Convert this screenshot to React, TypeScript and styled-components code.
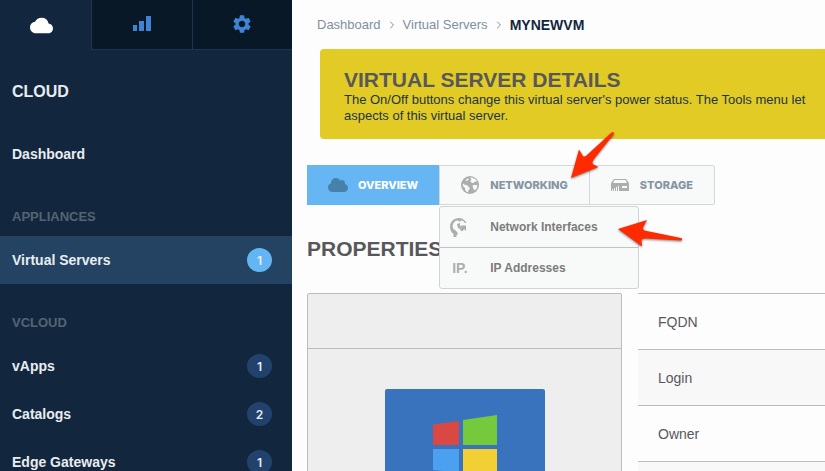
import React from "react";
import styled, { createGlobalStyle, css } from "styled-components";
import { MdCloud, MdSettings } from "react-icons/md";
import { FaCloud } from "react-icons/fa";
import { ChevronRight } from "lucide-react";

const GlobalStyle = createGlobalStyle`
  *, *::before, *::after { box-sizing: border-box; }
  body {
    margin: 0;
    background: #fdfdfd;
    color: #12273d;
    font-family: "Liberation Sans", Arial, sans-serif;
    font-size: 14px;
  }
  h1, h2, h3, p, ul, ol { margin: 0; padding: 0; }
  ul, ol { list-style: none; }
  a { color: inherit; text-decoration: none; }
  button { font: inherit; margin: 0; cursor: pointer; }
  svg { display: block; flex: none; }
`;

const Page = styled.div`
  position: relative;
  display: grid;
  grid-template-columns: 292px minmax(0, 1fr);
  height: 100vh;
  overflow: hidden;
`;

const Sidebar = styled.aside`
  background: #12273d;
  color: #e9edf1;
  font-weight: bold;
`;

const SectionTabs = styled.div`
  display: grid;
  grid-template-columns: 91px 1fr 1fr;
  height: 50px;
`;

const SectionTab = styled.button<{ $active?: boolean }>`
  display: flex;
  align-items: center;
  justify-content: center;
  padding: 0 8px 0 0;
  border: 0;
  background: #12273d;
  color: #ffffff;
  ${(p) =>
    !p.$active &&
    css`
      padding: 0 0 2px;
      border-left: 1px solid #1b3653;
      border-bottom: 1px solid #1b3653;
      background: #081826;
      color: #4082d4;
    `}
`;

const SidebarTitle = styled.h2`
  display: flex;
  align-items: center;
  height: 80px;
  padding: 4px 12px 0;
  font-size: 16px;
`;

const GroupTitle = styled.h3`
  display: flex;
  align-items: center;
  height: 58px;
  padding: 18px 12px 0;
  font-size: 13px;
  color: #526474;
`;

const NavLink = styled.a<{ $active?: boolean }>`
  display: flex;
  align-items: center;
  justify-content: space-between;
  height: 48px;
  padding: 0 20px 0 12px;
  background: ${(p) => (p.$active ? "#244362" : "transparent")};
`;

const Badge = styled.span<{ $active?: boolean }>`
  display: flex;
  align-items: center;
  justify-content: center;
  width: 25px;
  height: 24px;
  border-radius: 50%;
  background: ${(p) => (p.$active ? "#64b5f4" : "#20426d")};
  font-family: Inter, sans-serif;
  font-size: 12px;
  font-weight: 600;
`;

const Main = styled.main`
  min-width: 0;
  padding-left: 15px;
`;

const Breadcrumb = styled.ol`
  display: flex;
  align-items: center;
  height: 49px;
  padding-left: 10px;
  font-size: 13px;
  color: #7f909f;

  li {
    display: flex;
    align-items: center;
  }
  svg {
    margin: 0 5px;
  }
`;

const Current = styled.strong`
  font-size: 14px;
  color: #12273d;
`;

const Banner = styled.section`
  height: 90px;
  margin-left: 13px;
  padding: 19px 0 0 24px;
  border-radius: 4px 0 0 4px;
  background: #e1cb24;
  font-size: 13px;
  line-height: 16px;
  white-space: nowrap;
  color: #1f3444;
`;

const Heading = styled.h1`
  font-size: 21px;
  line-height: 24px;
  color: #58585b;
`;

const TabBar = styled.nav`
  display: flex;
  width: max-content;
  height: 40px;
  margin-top: 26px;
  border: 1px solid #d3d8dc;
  border-radius: 2px;
  background: #f8faf9;
`;

const TabSlot = styled.div`
  position: relative;
  display: flex;

  & + & {
    border-left: 1px solid #d3d8dc;
  }
`;

const Tab = styled.button<{ $active?: boolean }>`
  display: flex;
  align-items: center;
  gap: 11px;
  padding: 0 21px;
  border: 0;
  background: transparent;
  color: #8595a4;
  font-family: Inter, sans-serif;
  font-size: 11px;
  font-weight: 800;

  svg {
    color: #acaeae;
  }
  ${(p) =>
    p.$active &&
    css`
      gap: 10px;
      margin: -1px 0 -1px -1px;
      background: #66b6f3;
      color: #ffffff;
      svg {
        color: #4681ab;
      }
    `}
`;

const Menu = styled.ul`
  position: absolute;
  z-index: 2;
  top: 40px;
  left: -1px;
  width: 200px;
  border: 1px solid #d0d4d7;
  border-radius: 3px;
  background: #f8faf9;

  li + li {
    border-top: 1px solid #c0c2c3;
  }
`;

const MenuLink = styled.a`
  display: grid;
  grid-template-columns: 20px 1fr;
  gap: 20px;
  align-items: center;
  height: 40px;
  padding-left: 10px;
  font-size: 12px;
  font-weight: bold;
  color: #7c7c7c;
`;

const IpMark = styled.span`
  padding-left: 2px;
  font-size: 14px;
  color: #adafaf;
`;

const Title = styled.h2`
  margin: 32px 0;
  font-size: 21px;
  line-height: 24px;
  color: #58585b;
`;

const Details = styled.div`
  display: grid;
  grid-template-columns: 315px minmax(0, 1fr);
  gap: 16px;
`;

const Card = styled.section`
  border: 1px solid #bbbcbc;
  border-radius: 2px;
  background: #eeeeee;
`;

const CardHeader = styled.header`
  height: 55px;
  border-bottom: 1px solid #bbbcbc;
`;

const CardBody = styled.div`
  display: flex;
  justify-content: center;
  padding: 40px 0;
`;

const OsTile = styled.div`
  display: flex;
  justify-content: center;
  width: 160px;
  height: 160px;
  padding-top: 26px;
  border-radius: 2px;
  background: #3a73bd;
`;

const Properties = styled.table`
  width: 100%;
  align-self: start;
  border-collapse: collapse;

  tr {
    border-top: 1px solid #bbbcbc;
  }
  tr:nth-child(even) {
    background: #f8f8f8;
  }
  th {
    height: 56px;
    padding: 0 20px;
    font-weight: normal;
    text-align: left;
    color: #58585b;
  }
`;

const Pointer = styled.svg<{ $left: number; $top: number }>`
  position: absolute;
  z-index: 3;
  left: ${(p) => p.$left}px;
  top: ${(p) => p.$top}px;
  fill: #ff2a00;
  filter: drop-shadow(0 1px 1px rgba(0, 0, 0, 0.5));
  pointer-events: none;
`;

const BarsIcon = () => (
  <svg width="18" height="15" viewBox="0 0 18 15" fill="currentColor" aria-hidden="true">
    <path d="M0 9h4v6H0zM6 5h5v10H6zM13 0h5v15h-5z" />
  </svg>
);

const GlobeIcon = () => (
  <svg width="18" height="18" viewBox="0 0 18 18" aria-hidden="true">
    <circle cx="9" cy="9" r="9" fill="currentColor" />
    <path
      fill="#f8faf9"
      d="M9 1.500l2.500.2 3.200 1.800 1.300 2-2.500.3-1.200 1.500-1.800-.8L9.200 5 10.500 3.500zM1.700 7.500l2 1.300L5.500 9l2.500 2 .8 1.600-1.300 1.600-.5 2L4.500 15 4 12 2 10zM6 2.500 8 3 6.500 4.500 4.500 5.200zM11.500 9.500l2.300-.7 2.700.8-.8 2.900-1.900 2-1.500-1.800z"
    />
  </svg>
);

const InterfacesIcon = () => (
  <svg width="18" height="19" viewBox="0 0 18 19" fill="#acaeae" aria-hidden="true">
    <path
      fillRule="evenodd"
      d="M9 0C4 0 0 3.800 0 8.700c0 3.300 1.600 6 3.500 7.400V19h3v-2h1v-2.500l-1.800-2L3.500 11 2.500 8.500l.7-3L5.500 3 8 2.500l2 1.500 1-1.700 2.500 1L15 5h1.500C15 2 12.500 0 9 0z"
    />
    <path d="M7 6l3-1v3l2 1-2 2-2-1zM10.500 7.500H16V13l-1.800-1.700L12 13.500 9.800 11.500 12 9.300z" />
  </svg>
);

const DriveIcon = () => (
  <svg width="18" height="12" viewBox="0 0 18 12" fill="currentColor" aria-hidden="true">
    <path
      fillRule="evenodd"
      d="M3 0h12l3 4v8H8V7H7v5H6V8H5v4H4V9H3v3H2v-2H1v2H0V4zM3.500 1 2 4h14l-1.500-3zM11 7v2h5V7z"
    />
  </svg>
);

const WindowsIcon = () => (
  <svg width="64" height="73" viewBox="0 0 64 73" role="img" aria-label="Windows">
    <path fill="#da4844" d="M0 9.500 26 6v24H0z" />
    <path fill="#74ca3c" d="M30 5 64 0v30H30z" />
    <path fill="#4ba1f0" d="M0 34h26v23.500L0 55z" />
    <path fill="#f1cf35" d="M30 34h34v30l-34-5z" />
  </svg>
);

const groups = [
  { title: "APPLIANCES", items: [{ label: "Virtual Servers", count: 1, active: true }] },
  {
    title: "VCLOUD",
    items: [
      { label: "vApps", count: 1, active: false },
      { label: "Catalogs", count: 2, active: false },
      { label: "Edge Gateways", count: 1, active: false },
    ],
  },
];

const properties = ["FQDN", "Login", "Owner", ""];

export default function App() {
  return (
    <Page>
      <GlobalStyle />
      <Sidebar>
        <SectionTabs>
          <SectionTab $active aria-label="Cloud">
            <MdCloud size={23} />
          </SectionTab>
          <SectionTab aria-label="Statistics">
            <BarsIcon />
          </SectionTab>
          <SectionTab aria-label="Settings">
            <MdSettings size={22} />
          </SectionTab>
        </SectionTabs>
        <SidebarTitle>CLOUD</SidebarTitle>
        <NavLink href="#dashboard">Dashboard</NavLink>
        {groups.map((group) => (
          <section key={group.title}>
            <GroupTitle>{group.title}</GroupTitle>
            {group.items.map((item) => (
              <NavLink key={item.label} href="#list" $active={item.active}>
                {item.label}
                <Badge $active={item.active}>{item.count}</Badge>
              </NavLink>
            ))}
          </section>
        ))}
      </Sidebar>

      <Main>
        <Breadcrumb>
          <li>
            <a href="#dashboard">Dashboard</a>
            <ChevronRight size={12} />
          </li>
          <li>
            <a href="#servers">Virtual Servers</a>
            <ChevronRight size={12} />
          </li>
          <li>
            <Current>MYNEWVM</Current>
          </li>
        </Breadcrumb>

        <Banner>
          <Heading>VIRTUAL SERVER DETAILS</Heading>
          <p>
            The On/Off buttons change this virtual server's power status. The Tools menu let
            <br />
            aspects of this virtual server.
          </p>
        </Banner>

        <TabBar>
          <TabSlot>
            <Tab $active>
              <FaCloud size={20} />
              OVERVIEW
            </Tab>
          </TabSlot>
          <TabSlot>
            <Tab aria-expanded="true">
              <GlobeIcon />
              NETWORKING
            </Tab>
            <Menu>
              <li>
                <MenuLink href="#interfaces">
                  <InterfacesIcon />
                  Network Interfaces
                </MenuLink>
              </li>
              <li>
                <MenuLink href="#addresses">
                  <IpMark>IP.</IpMark>
                  IP Addresses
                </MenuLink>
              </li>
            </Menu>
          </TabSlot>
          <TabSlot>
            <Tab>
              <DriveIcon />
              STORAGE
            </Tab>
          </TabSlot>
        </TabBar>

        <Title>PROPERTIES</Title>

        <Details>
          <Card>
            <CardHeader />
            <CardBody>
              <OsTile>
                <WindowsIcon />
              </OsTile>
            </CardBody>
          </Card>
          <Properties>
            <tbody>
              {properties.map((name) => (
                <tr key={name}>
                  <th scope="row">{name}</th>
                </tr>
              ))}
            </tbody>
          </Properties>
        </Details>
      </Main>

      <Pointer $left={571} $top={132} width="44" height="47" viewBox="0 0 44 47" aria-hidden="true">
        <path d="M0 46 8 17.500l4 6.500c1 1 2.500.5 4-1L40 1c1.500-1.300 4-.5 2.500 1.500L23 27c-2 3-2 4.500-.5 5.500l5 2.500z" />
      </Pointer>
      <Pointer $left={618} $top={219} width="65" height="29" viewBox="0 0 65 29" aria-hidden="true">
        <path d="M0 10 29 1l-4 7.500c-.5 1.500.5 2.800 2.500 3.300L63 19c1.500.5 1.500 2.500 0 2.500L28 19.500c-3-.2-4.500.5-4.500 2l.5 6z" />
      </Pointer>
    </Page>
  );
}
